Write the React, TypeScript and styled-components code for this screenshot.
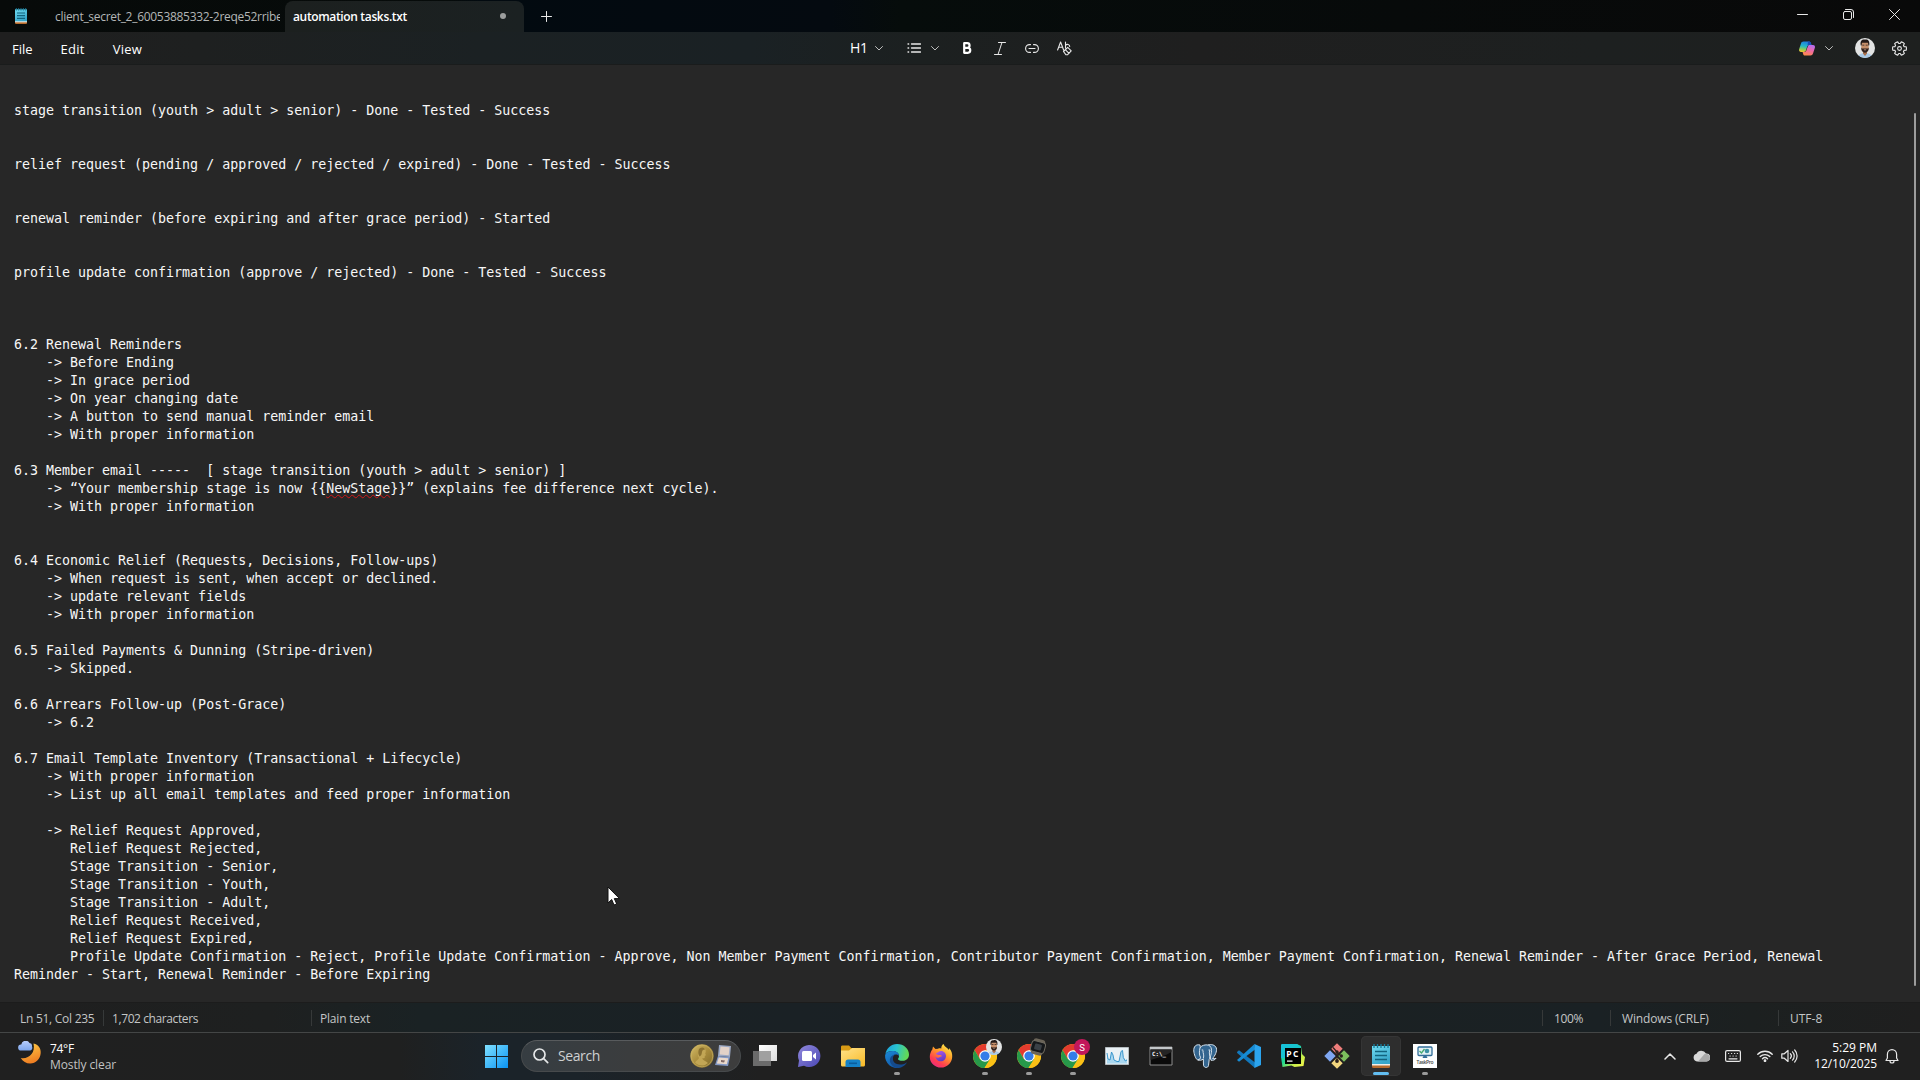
import React from "react";
import styled, { createGlobalStyle, css } from "styled-components";

const Global = createGlobalStyle`
  * { box-sizing: border-box; }
  html, body { margin: 0; padding: 0; background: #272727; overflow: hidden; }
`;

const Screen = styled.div`
  width: 1920px;
  height: 1080px;
  display: flex;
  flex-direction: column;
  overflow: hidden;
  color: #fff;
  font-family: "Open Sans", "Noto Sans", sans-serif;
  font-size: 12px;
`;

const Text = styled.span<{ $size?: number; $track?: number; $color?: string; $weight?: number; $line?: number }>`
  font-size: ${(p) => p.$size ?? 12}px;
  letter-spacing: ${(p) => p.$track ?? 0}px;
  color: ${(p) => p.$color ?? "#fff"};
  font-weight: ${(p) => p.$weight ?? 400};
  line-height: ${(p) => p.$line ?? 16}px;
  white-space: pre;
`;

/* title bar */
const TitleBar = styled.div`
  height: 32px;
  flex: none;
  display: flex;
  align-items: flex-start;
  background: linear-gradient(90deg, #070a09 0, #060b0a 450px, #020a10 480px, #040a10 830px, #060c0b 900px, #070a0a 1400px, #090909 100%);
`;
const AppIcon = styled.div`
  width: 55px;
  padding: 8px 0 0 13px;
`;
const IdleTab = styled.div`
  width: 230px;
  height: 32px;
  padding-top: 9px;
  overflow: hidden;
`;
const IdleLabel = styled.div`
  width: 225px;
  overflow: hidden;
  line-height: 16px;
`;
const ActiveTab = styled.div`
  width: 239px;
  height: 31px;
  margin-top: 1px;
  padding: 8px 18px 0 8px;
  display: flex;
  justify-content: space-between;
  border-radius: 8px 8px 0 0;
  background: linear-gradient(90deg, #1c201f, #1b2122);
`;
const Dot = styled.i`
  width: 6px;
  height: 6px;
  margin-top: 4px;
  border-radius: 50%;
  background: #9b9d9d;
`;
const NewTab = styled.div`
  padding: 11px 0 0 17px;
  flex: 1;
  svg { display: block; }
`;
const WindowButtons = styled.div`
  display: flex;
  align-items: center;
  height: 29px;
  padding-right: 3px;
`;
const WindowButton = styled.div`
  width: 46px;
  display: flex;
  justify-content: center;
`;

/* menu row */
const MenuBar = styled.div`
  height: 33px;
  flex: none;
  display: grid;
  grid-template-columns: 850px 1fr auto;
  align-items: center;
  border-bottom: 1px solid #1a1c1c;
  background: linear-gradient(90deg, #1f1f1f 0, #1e2020 200px, #1b2123 480px, #1a2124 750px, #1c2020 920px, #1f1f1f 1200px, #1d2020 1600px, #1e201f 100%);
`;
const Menus = styled.div`
  display: flex;
  gap: 28px;
  padding: 1px 0 0 12px;
`;
const FormatTools = styled.div`
  display: flex;
  align-items: center;
`;
const Slot = styled.div<{ $w: number; $end?: boolean }>`
  width: ${(p) => p.$w}px;
  height: 32px;
  flex: none;
  display: flex;
  align-items: center;
  justify-content: ${(p) => (p.$end ? "flex-end" : "flex-start")};
`;
const AccountTools = styled.div`
  display: flex;
  align-items: center;
  padding-right: 13px;
`;

/* document */
const Editor = styled.div`
  flex: 1;
  min-height: 0;
  display: flex;
  justify-content: space-between;
  background: #272727;
`;
const Document = styled.div`
  padding: 37px 0 0 14px;
  font-family: "DejaVu Sans Mono", monospace;
  font-size: 13.31px;
  color: #f7f7f7;
`;
const DocLine = styled.div`
  display: flex;
  height: 18px;
  line-height: 18px;
  white-space: pre;
`;
const Misspelt = styled.span`
  text-decoration: underline wavy #d01818 1px;
  text-underline-offset: 1px;
  text-decoration-skip-ink: none;
`;
const ScrollThumb = styled.div`
  width: 2px;
  height: 873px;
  margin: 48px 4px 0 0;
  border-radius: 1px;
  background: #9c9c9c;
`;

/* status bar */
const StatusBar = styled.div`
  height: 30px;
  flex: none;
  display: flex;
  align-items: center;
  border-top: 1px solid #1c1c1c;
  background: linear-gradient(90deg, #1f1f1f 0, #1e2020 270px, #1a2224 420px, #1a2125 800px, #1b2122 1200px, #1a2124 1600px, #1c2020 1750px, #1f1f1f 100%);
`;
const StatusCell = styled.div<{ $w?: number; $pad: number; $line?: boolean }>`
  ${(p) => (p.$w ? css`width: ${p.$w}px;` : css`flex: 1;`)}
  height: 16px;
  padding: 2px 0 0 ${(p) => p.$pad}px;
  display: flex;
  align-items: center;
  border-left: ${(p) => (p.$line ? "1px solid #363939" : "0")};
`;

/* taskbar */
const Taskbar = styled.div`
  height: 48px;
  flex: none;
  display: grid;
  grid-template-columns: 474px 1fr auto;
  align-items: start;
  padding-top: 3px;
  border-top: 1px solid #444646;
  background: linear-gradient(90deg, #202020 0, #1f2020 400px, #1b2329 480px, #1b2329 580px, #202020 760px, #202020 100%);
`;
const Weather = styled.div`
  display: flex;
  padding: 5px 0 0 18px;
  gap: 8px;
`;
const Stack = styled.div<{ $right?: boolean }>`
  display: flex;
  flex-direction: column;
  align-items: ${(p) => (p.$right ? "flex-end" : "flex-start")};
`;
const Launchers = styled.div`
  display: flex;
  align-items: center;
  height: 40px;
`;
const StartButton = styled.div`
  width: 47px;
  display: flex;
  padding-left: 11px;
`;
const SearchBox = styled.div`
  width: 220px;
  height: 32px;
  display: flex;
  align-items: center;
  margin-right: 2px;
  padding: 0 8px 0 11px;
  border-radius: 16px;
  border: 1px solid #474a4c;
  border-top-color: #585b5d;
  background: linear-gradient(90deg, #363d42, #3b3d3e 50%, #3d3d3d);
`;
const SearchText = styled.div`
  flex: 1;
  padding-left: 9px;
`;
const TaskButton = styled.div<{ $active?: boolean }>`
  width: 40px;
  height: 40px;
  margin: 0 2px;
  padding-top: 8px;
  display: flex;
  flex-direction: column;
  align-items: center;
  border-radius: 5px;
  background: ${(p) => (p.$active ? "#2e2e2e" : "transparent")};
  box-shadow: ${(p) => (p.$active ? "inset 0 0 0 1px #353535" : "none")};
  svg { overflow: visible; }
`;
const Running = styled.i<{ $active?: boolean }>`
  width: ${(p) => (p.$active ? 16 : 6)}px;
  height: 3px;
  margin-top: 4px;
  border-radius: 2px;
  background: ${(p) => (p.$active ? "#62bdf0" : "#9a9a9a")};
`;
const Tray = styled.div`
  display: flex;
  align-items: center;
  height: 40px;
  padding-right: 21px;
  svg { display: block; }
`;

const Cursor = styled.svg`
  position: absolute;
  left: 607px;
  top: 886px;
`;

type Glyph = { w?: number; h?: number; box?: string; sw?: number; color?: string; children: React.ReactNode };
const Line = ({ w = 16, h = 16, box, sw = 1, color = "#e8e8e8", children }: Glyph) => (
  <svg width={w} height={h} viewBox={box ?? `0 0 ${w} ${h}`} fill="none" stroke={color} strokeWidth={sw} strokeLinecap="round" strokeLinejoin="round">
    {children}
  </svg>
);
const Chevron = () => <Line w={8} h={5} color="#bdbdbd"><path d="M.5.5 4 4 7.5.5" /></Line>;

const NotepadIcon = ({ w, h }: { w: number; h: number }) => (
  <svg width={w} height={h} viewBox="0 0 20 24">
    <defs><linearGradient id="np" x2=".5" y2="1"><stop stopColor="#72dcf2" /><stop offset="1" stopColor="#36a6ca" /></linearGradient></defs>
    <path d="M1 20h18v2.500a1.500 1.500 0 0 1-1.500 1.500h-15A1.500 1.500 0 0 1 1 22.500z" fill="#b76b2c" />
    <path d="M1 19h18v2.500H1z" fill="#f0eee8" />
    <path d="M1 2h18v18H1z" fill="url(#np)" />
    <path d="M3 0v4M6.500 0v4M10 0v4M13.500 0v4M17 0v4" stroke="#167d9d" strokeWidth="1.300" />
    <path d="M4 7.500h12M4 11.500h12M4 15.500h12" stroke="#12647f" strokeWidth="1.700" />
  </svg>
);

const CopilotIcon = () => (
  <svg width="16" height="15" viewBox="0 0 16 15">
    <defs>
      <linearGradient id="cpa" x1=".5" x2=".3" y2="1"><stop stopColor="#1f7de0" /><stop offset=".45" stopColor="#25b6c8" /><stop offset=".75" stopColor="#8ccd55" /><stop offset="1" stopColor="#f1c62f" /></linearGradient>
      <linearGradient id="cpb" x1=".7" x2=".3" y2="1"><stop stopColor="#b56cf0" /><stop offset=".5" stopColor="#ef6aa0" /><stop offset="1" stopColor="#ff8a4a" /></linearGradient>
    </defs>
    <path d="M4.500.500H10c1.400 0 1.700 1 2 2.100l.5 1.700H10c-1.200 0-1.700.8-2 1.800L7 9.300C6.600 10.400 6 11 4.800 11H2C.2 11-.3 9.600.2 8L2 2.400C2.400 1.200 3.200.500 4.500.500z" fill="url(#cpa)" />
    <path d="M11.500 14.500H6c-1.400 0-1.700-1-2-2.100L3.600 11H5c1.500 0 2.200-.8 2.600-2L8.700 5.700C9 4.600 9.700 4 11 4h3c1.800 0 2.300 1.400 1.800 3L14 12.600c-.4 1.200-1.200 1.900-2.500 1.900z" fill="url(#cpb)" />
    <path d="M9 .500h1c1.400 0 1.700 1 2 2.100l.5 1.500H8.600z" fill="#174fb8" />
  </svg>
);

const Portrait = ({ x = 0, y = 0, size = 20 }: { x?: number; y?: number; size?: number }) => (
  <svg x={x} y={y} width={size} height={size} viewBox="0 0 20 20">
    <circle cx="10" cy="10" r="10" fill="#e2e3e3" />
    <path d="M3.500 17.500C5 15.500 8 15 10 15s5 .500 6.500 2.500A10 10 0 0 1 3.500 17.500z" fill="#a9c9e6" />
    <path d="M8 12h4v3.500l-2 2.500-2-2.500z" fill="#a86f4c" />
    <path d="M6.300 4h7.400v6.200c0 2.300-1.900 4.400-3.700 4.400s-3.700-2.100-3.700-4.400z" fill="#c68f6a" />
    <path d="M5.800 7.500C4.800 3 7 1.300 9.500 1.600c3-.9 5.600.900 4.700 5.900h-.8L13 4.800H7l-.4 2.700z" fill="#241a18" />
    <path d="M6.300 9.500c.5 1.300 1.500 1.200 3.700 1 2.200.2 3.200.300 3.700-1v1.200c0 2.300-1.900 4-3.700 4s-3.700-1.700-3.700-4zM7.300 6.700h2v.7h-2zM10.700 6.700h2v.7h-2z" fill="#30211d" />
    <path d="M8.700 11.500h2.600l-.5.7H9.200z" fill="#d9aa94" />
  </svg>
);

const ChromeIcon = ({ children }: { children?: React.ReactNode }) => (
  <svg width="24" height="24" viewBox="0 0 24 24">
    <circle cx="12" cy="12" r="12" fill="#fbc116" />
    <path d="M1.600 6A12 12 0 0 1 22.400 6H12l-5.200 9z" fill="#e33b2e" />
    <path d="M1.600 6 6.800 15 12 18 11.500 24A12 12 0 0 1 1.600 6z" fill="#27994a" />
    <path d="M6.800 15h10.400L11.500 24A12 12 0 0 1 3 20z" fill="#27994a" />
    <path d="M22.400 6A12 12 0 0 1 11.500 24l5.700-9L15 6z" fill="#fbc116" />
    <circle cx="12" cy="12" r="5.800" fill="#fff" />
    <circle cx="12" cy="12" r="4.600" fill="#347de8" />
    {children}
  </svg>
);

const StartIcon = () => (
  <svg width="23" height="23" viewBox="0 0 23 23">
    <defs><linearGradient id="win" x2="1" y2="1"><stop stopColor="#7fe0ff" /><stop offset="1" stopColor="#0a93f2" /></linearGradient></defs>
    <path d="M0 0h11v11H0zM12 0h11v11H12zM0 12h11v11H0zM12 12h11v11H12z" fill="url(#win)" />
  </svg>
);

const MedalIcon = () => (
  <svg width="42" height="26" viewBox="0 0 42 26">
    <defs><linearGradient id="gold" x2="1" y2="1"><stop stopColor="#d5bd69" /><stop offset=".5" stopColor="#a98c3c" /><stop offset="1" stopColor="#7e682a" /></linearGradient></defs>
    <circle cx="12" cy="13" r="11.700" fill="url(#gold)" />
    <circle cx="12" cy="13" r="10.800" fill="none" stroke="#cfb766" strokeWidth=".6" />
    <path d="M8.500 7.500C9 4 14.500 3.500 15.500 7c.5 1.500.2 2.500-.3 3.500l.8 1.700-1.200.5-.2 2.300-2.600.5c1 2 4 2.500 6 4.500-3.500 3.500-9.500 3.500-13-.5 1-2 3-2.500 4-4.500-1.500-2-1.500-5-.5-7.500z" fill="#c2a655" />
    <path d="M8.500 7.500C9 4 14 3.500 15 6.500c-2 0-3 1-3.200 3.500-.2 2-1 2.500-2 3.500-1.500-1.500-1.800-4-1.300-6z" fill="#8c7231" />
    <path d="m29 2 12 1-1 11-12-1z" fill="#9aa8c4" />
    <path d="m30.500 3.500 9 .8-.8 8-9-.7z" fill="#e2d2c8" />
    <path d="m28 13 12 1-2 9-13-1z" fill="#8298c4" />
    <path d="m28.800 14.500 9.500.8-1.500 6-10-.8z" fill="#ead9cb" />
    <path d="m31 17 4 .5-1 2-3-.5z" fill="#826a66" />
  </svg>
);

const TaskViewIcon = () => (
  <svg width="24" height="24" viewBox="0 0 24 24">
    <defs><linearGradient id="tv" x2="1" y2="1"><stop stopColor="#fff" /><stop offset="1" stopColor="#dcdcdc" /></linearGradient></defs>
    <path d="M6 1h18v16H6z" fill="url(#tv)" />
    <path d="M0 7h18v15H0z" fill="#6b6b6b" />
    <path d="M6 7h12v10H6z" fill="#a0a0a0" />
  </svg>
);

const ChatIcon = () => (
  <svg width="24" height="24" viewBox="0 0 24 24">
    <defs><linearGradient id="chat" x2="1" y2="1"><stop stopColor="#9189dc" /><stop offset="1" stopColor="#4b48b5" /></linearGradient></defs>
    <path d="M12 1a11.300 11 0 1 1-5 20.800L1 23l1-6.500A11.300 11 0 0 1 12 1z" fill="url(#chat)" />
    <rect x="5" y="7" width="10" height="10" rx="1.500" fill="#fff" />
    <path d="m16 11 3-2.500v7L16 13z" fill="#fff" />
  </svg>
);

const FolderIcon = () => (
  <svg width="24" height="24" viewBox="0 0 24 24">
    <defs><linearGradient id="fold" x2=".8" y2="1"><stop stopColor="#ffe28a" /><stop offset="1" stopColor="#f9bd2e" /></linearGradient></defs>
    <path d="M0 3c0-1 .5-1.500 1.500-1.500H8l2.500 2.700H22c1.500 0 2 .8 2 1.800V12H0z" fill="#d99b15" />
    <path d="M0 6.500h8L11 4h13v17c0 .800-.6 1.500-1.500 1.500h-21C.6 22.500 0 21.800 0 21z" fill="url(#fold)" />
    <path d="M4.500 23v-5c0-1.500 1-2.500 2.500-2.500h10c1.500 0 2.500 1 2.500 2.500v5z" fill="#1581c7" />
    <path d="M8 18.500h8v1.600H8z" fill="#0b5d9d" />
  </svg>
);

const EdgeIcon = () => (
  <svg width="24" height="24" viewBox="0 0 24 24">
    <defs>
      <linearGradient id="eda" x2="1" y2=".2"><stop stopColor="#1c9ede" /><stop offset=".5" stopColor="#29c3d0" /><stop offset="1" stopColor="#62d957" /></linearGradient>
      <linearGradient id="edb" x2=".6" y2="1"><stop stopColor="#1b8ad8" /><stop offset="1" stopColor="#1258a8" /></linearGradient>
    </defs>
    <path d="M.3 10.500C1.300 4.500 6 0 12 0c7 0 12 5 12 10.500 0 4-3 6.300-6.500 6.300-2.800 0-4.500-1-4.500-1.900 0-.7 1-1 1-3C14 9.500 11.500 7 8 7 4 7 1 8.500.3 10.500z" fill="url(#eda)" />
    <path d="M.1 11C1 8.500 4 7 8 7c3.500 0 6 2.300 6 4.700-1-.9-2-1.200-3.200-1.200-2 0-3.300 1.500-3.300 4.200 0 4 3 8 7.500 8.900A12 12 0 0 1 .1 11z" fill="url(#edb)" />
    <path d="M8 13.500c-.8 5 3.500 7.500 8.500 6.900 2.200-.2 4.200-1.200 5.600-2.200C20 22 16 24 12.500 24 8 23.500 4.500 19.500 4.900 15.500 5.300 12.500 8 10.500 10.800 10.500 8.900 11 8.200 12.200 8 13.500z" fill="#154a8c" />
  </svg>
);

const FirefoxIcon = () => (
  <svg width="24" height="24" viewBox="0 0 24 24">
    <defs>
      <linearGradient id="ffa" x1=".8" x2=".2" y2="1"><stop stopColor="#fff04e" /><stop offset=".4" stopColor="#ff9a28" /><stop offset=".75" stopColor="#ff3d50" /><stop offset="1" stopColor="#e82a88" /></linearGradient>
      <linearGradient id="ffb" x2=".4" y2="1"><stop stopColor="#b45ce8" /><stop offset="1" stopColor="#623bc8" /></linearGradient>
    </defs>
    <path d="M14.500 0c1 3 4 3.700 5.500 6 .2-1 .1-1.500 0-2 2.500 2.500 3.500 6 3.200 9C22.800 19 18 23.600 12 23.600S.8 19 .8 13c0-3 1-5.500 2.500-7.500L4 2.500 6.500 5l2.700-.300C10 4 11 4.500 12.300 4.500 12.200 2.500 13 1 14.500 0z" fill="url(#ffa)" />
    <path d="M7 9c2 0 2-1.500 4.500-2 3-.5 5.500 2 5.500 5s-2.200 5.300-5.200 5.300S6.500 15 6.500 12.500C7.500 14 9 14.200 10.500 13.200c1-.6 1.600-.9 2.500-1-.8-1.200-2-1.300-3.500-1.200C8 11 7.200 10.200 7 9z" fill="url(#ffb)" />
  </svg>
);

const MonitorGraphIcon = () => (
  <svg width="24" height="24" viewBox="0 0 24 24">
    <path d="M.5 3.500h23v17H.5z" fill="#e9f1f5" stroke="#b5bcc0" />
    <path d="M2 19.500V10l1 5 2 1 1.500-8 1.500 3 1 5 3 1 2 0 2-9 1.500-2 .8 7 2 3 1.700-1v4.500z" fill="#a9d7f0" />
    <path d="M2 9l1 6 2 1 1.500-8 1.500 3 1 5 3 1.500h2l2-10 1.500-1 .8 7 2 3.500 1.700-1" fill="none" stroke="#2d8fc8" strokeWidth=".9" />
  </svg>
);

const TerminalIcon = () => (
  <svg width="24" height="24" viewBox="0 0 24 24">
    <path d="M1 3h22v18H1z" fill="#0a0a0a" stroke="#8d8d8d" />
    <path d="M1 3h22v2.500H1z" fill="#c3c7ca" />
    <path d="M1.500 16C8 14 16 12 22.500 8V5.500h-21z" fill="#242424" />
    <text x="3" y="11.500" fontSize="5.800" fontFamily="DejaVu Sans Mono" fontWeight="700" fill="#fff">C:\_</text>
  </svg>
);

const PostgresIcon = () => (
  <svg width="24" height="24" viewBox="0 0 24 24" stroke="#d6e2ec" strokeWidth="1" strokeLinejoin="round">
    <path d="M7 1C3 0 .5 2.500.8 7c.2 3 2 8.500 4 9 1.500.3 2-1 3.500-3z" fill="#33658f" />
    <path d="M15 1c3-1 7-.3 8.300 3 1 3.500-1.500 8-3.800 10.500 1 .4 2.500.2 3.500-.2-1 1.700-3 2.200-5 2L16 8z" fill="#33658f" />
    <path d="M7 4c1-3 9-5 11-.5 1.500 4-.5 9-1.800 12l-.7 6c-.3 2.500-4.500 2.700-5-.3L10.300 15c-1.600 1.500-4 1.500-5.300.8 2-.6 2.500-1 2.500-2.500C6 11 6.200 7 7 4z" fill="#33658f" />
    <path d="M10 6.500c-.2 3 1.500 4 .3 8M17 6c-1.500 3 0 5 0 8.500" fill="none" />
    <path d="M8.700 6h1.500M15.500 6H17" />
  </svg>
);

const CodeIcon = () => (
  <svg width="24" height="24" viewBox="0 0 24 24">
    <path d="M0 8 2 6.300 18 18.500V24L.2 9z" fill="#1278bd" />
    <path d="M0 16 17.500 0 18 5.500 2 17.700z" fill="#168cd5" />
    <path d="M17.500 0 24 3v18l-6.500 3V0z" fill="#2ba4ee" />
  </svg>
);

const PyCharmIcon = () => (
  <svg width="24" height="24" viewBox="0 0 24 24">
    <defs><linearGradient id="pyc" x1="0" y1="0" x2="1" y2="1"><stop stopColor="#21c7d9" /><stop offset=".45" stopColor="#20d78f" /><stop offset=".7" stopColor="#c4ee4b" /><stop offset="1" stopColor="#fcf84a" /></linearGradient></defs>
    <path d="M0 1 1 0h15l4 2 1 8 3 3-1.500 9-9 1-3-1.500-9 1.500L0 13z" fill="url(#pyc)" />
    <path d="M0 1 1 0h15l4 3-5 11H0z" fill="#14bedd" opacity=".75" />
    <path d="M4 4h16v16H4z" fill="#000" />
    <text x="5.300" y="12.800" fontSize="8.500" fontFamily="Open Sans" fontWeight="700" fill="#fff" textLength="12">PC</text>
    <path d="M6 16.500h5.500v1.200H6z" fill="#fff" />
  </svg>
);

const GitIcon = () => (
  <svg width="24" height="24" viewBox="0 0 24 24">
    <rect x="8" y=".8" width="8" height="8" transform="rotate(45 12 4.800)" fill="#ef7d7b" />
    <rect x="1" y="8" width="8" height="8" transform="rotate(45 5 12)" fill="#7fa7f2" />
    <rect x="15" y="8" width="8" height="8" transform="rotate(45 19 12)" fill="#7cc05d" />
    <rect x="8" y="15.200" width="8" height="8" transform="rotate(45 12 19.200)" fill="#f3d77f" />
    <path d="M8 3.500 12 8v9M12 8l4 4" stroke="#2b211d" strokeWidth="1.200" fill="none" />
    <circle cx="12" cy="8" r="1.700" fill="#2b211d" /><circle cx="12" cy="17" r="1.900" fill="#2b211d" /><circle cx="16.300" cy="12" r="1.700" fill="#2b211d" />
  </svg>
);

const TaskProIcon = () => (
  <svg width="24" height="24" viewBox="0 0 24 24">
    <path d="M0 0h24v24H0z" fill="#fff" />
    <rect x="5" y="3" width="14" height="8.500" rx="1" fill="#e3f1f5" stroke="#326e99" strokeWidth="1.300" />
    <path d="m6.500 7 2 2 3-4" stroke="#43a870" strokeWidth="1.300" fill="none" />
    <circle cx="14" cy="7" r="2.300" fill="#3c91a5" />
    <path d="M10.500 12h3l1 2h-5z" fill="#326e99" />
    <text x="3.500" y="19.500" fontSize="5" fontFamily="Open Sans" fontWeight="600" fill="#444" textLength="17">TaskPro</text>
  </svg>
);

const WeatherIcon = () => (
  <svg width="24" height="24" viewBox="0 0 24 24">
    <defs>
      <linearGradient id="moon" x2=".3" y2="1"><stop stopColor="#ffcf48" /><stop offset="1" stopColor="#ef8023" /></linearGradient>
      <linearGradient id="cloud" x2="0" y2="1"><stop stopColor="#b7cdfb" /><stop offset="1" stopColor="#7da6ec" /></linearGradient>
    </defs>
    <path d="M15.500 2.500c5 1 7.500 5 7.200 9.500-.4 6-5 10.500-10.500 10.500-4 0-7.500-2-9.500-5.500 8 1.500 15-5 12.800-14.500z" fill="url(#moon)" />
    <path d="M3 9.500a3 3 0 0 1 .3-6A4.400 4.400 0 0 1 11.500 2 3 3 0 0 1 14 5.500c.6 1 .4 3.800-2 4z" fill="url(#cloud)" />
  </svg>
);

const FLAGGED = "NewStage";
const NOTE = `stage transition (youth > adult > senior) - Done - Tested - Success


relief request (pending / approved / rejected / expired) - Done - Tested - Success


renewal reminder (before expiring and after grace period) - Started


profile update confirmation (approve / rejected) - Done - Tested - Success



6.2 Renewal Reminders
    -> Before Ending
    -> In grace period
    -> On year changing date
    -> A button to send manual reminder email
    -> With proper information

6.3 Member email -----  [ stage transition (youth > adult > senior) ]
    -> “Your membership stage is now {{NewStage}}” (explains fee difference next cycle).
    -> With proper information


6.4 Economic Relief (Requests, Decisions, Follow-ups)
    -> When request is sent, when accept or declined.
    -> update relevant fields
    -> With proper information

6.5 Failed Payments & Dunning (Stripe-driven)
    -> Skipped.

6.6 Arrears Follow-up (Post-Grace)
    -> 6.2

6.7 Email Template Inventory (Transactional + Lifecycle)
    -> With proper information
    -> List up all email templates and feed proper information

    -> Relief Request Approved,
       Relief Request Rejected,
       Stage Transition - Senior,
       Stage Transition - Youth,
       Stage Transition - Adult,
       Relief Request Received,
       Relief Request Expired,
       Profile Update Confirmation - Reject, Profile Update Confirmation - Approve, Non Member Payment Confirmation, Contributor Payment Confirmation, Member Payment Confirmation, Renewal Reminder - After Grace Period, Renewal
Reminder - Start, Renewal Reminder - Before Expiring`;

const NoteLine = ({ text }: { text: string }) => {
  const [head, tail] = text.split(FLAGGED);
  if (tail === undefined) return <DocLine>{text}</DocLine>;
  return (
    <DocLine>
      <span>{head}</span>
      <Misspelt>{FLAGGED}</Misspelt>
      <span>{tail}</span>
    </DocLine>
  );
};

const at = (r: number, deg: number) => {
  const t = (deg * Math.PI) / 180;
  return `${(r * Math.cos(t)).toFixed(2)} ${(r * Math.sin(t)).toFixed(2)}`;
};
const gearPath =
  [0, 60, 120, 180, 240, 300]
    .map((a, i) => `${i ? "L" : "M"}${at(5, a - 22)}L${at(6.9, a - 15)}Q${at(7.2, a)} ${at(6.9, a + 15)}L${at(5, a + 22)}`)
    .join("") + "Z";

export default function App() {
  return (
    <Screen>
      <Global />
      <TitleBar>
        <AppIcon><NotepadIcon w={16} h={16} /></AppIcon>
        <IdleTab>
          <IdleLabel><Text $color="#b4b6b6" $track={-0.3}>client_secret_2_60053885332-2reqe52rribe</Text></IdleLabel>
        </IdleTab>
        <ActiveTab>
          <Text $weight={600} $track={-0.35}>automation tasks.txt</Text>
          <Dot />
        </ActiveTab>
        <NewTab><Line w={11} h={11}><path d="M5.500.500v10M.500 5.500h10" /></Line></NewTab>
        <WindowButtons>
          <WindowButton><Line w={11} h={11}><path d="M.500 5.500h10" /></Line></WindowButton>
          <WindowButton><Line w={11} h={11}><rect x=".5" y="2.500" width="8" height="8" rx="1.500" /><path d="M2.500.500H8a2.500 2.500 0 0 1 2.500 2.500v5.500" /></Line></WindowButton>
          <WindowButton><Line w={11} h={11}><path d="m.5.500 10 10m0-10-10 10" /></Line></WindowButton>
        </WindowButtons>
      </TitleBar>
      <MenuBar>
        <Menus>
          <Text $size={13}>File</Text>
          <Text $size={13} $track={0.25}>Edit</Text>
          <Text $size={13} $track={0.25}>View</Text>
        </Menus>
        <FormatTools>
          <Slot $w={25}><Text $size={14} $track={-0.4}>H1</Text></Slot>
          <Slot $w={32}><Chevron /></Slot>
          <Slot $w={24}>
            <Line w={14} h={10} sw={1.3}><path d="M4.500 1h9M4.500 5h9M4.500 9h9M1 1h.7M1 5h.7M1 9h.7" /></Line>
          </Slot>
          <Slot $w={32}><Chevron /></Slot>
          <Slot $w={31}>
            <Line w={9} h={12} sw={2.2} color="#fff"><path d="M1.200 1.200h3a2.300 2.300 0 0 1 0 4.700h-3zM1.200 5.900h3.600a2.450 2.450 0 0 1 0 4.900H1.200z" /></Line>
          </Slot>
          <Slot $w={31}>
            <Line w={12} h={13}><path d="M4.500.500h7M.500 12.500h7M8 .500l-4 12" /></Line>
          </Slot>
          <Slot $w={32}>
            <Line w={14} h={9} sw={1.1}><path d="M5.500.600h-1a3.900 3.900 0 0 0 0 7.800h1M8.500.600h1a3.900 3.900 0 0 1 0 7.800h-1M4 4.500h6" /></Line>
          </Slot>
          <Slot $w={20}>
            <Line w={15} h={15} sw={1.1}><path d="m.6 9 3-8 3 8M1.600 6.200h4M8.500 1v6M8.500 4.500c1.500-2 4.200-1 4.200 1M6.500 10.500l4.200-4.200 3.500 3.500-3.800 4H9zM8.300 8.700l3.700 3.700" /></Line>
          </Slot>
        </FormatTools>
        <AccountTools>
          <Slot $w={26}><CopilotIcon /></Slot>
          <Slot $w={30}><Chevron /></Slot>
          <Slot $w={37}><Portrait /></Slot>
          <Slot $w={15}>
            <Line w={15} h={15} box="-7.500 -7.500 15 15" sw={1.1}>
              <path d={gearPath} />
              <circle r="1.900" />
            </Line>
          </Slot>
        </AccountTools>
      </MenuBar>

      <Editor>
        <Document>
          {NOTE.split("\n").map((line, i) => <NoteLine key={i} text={line} />)}
        </Document>
        <ScrollThumb />
      </Editor>

      <StatusBar>
        <StatusCell $w={103} $pad={20}><Text $color="#c4c6c6" $track={-0.27}>Ln 51, Col 235</Text></StatusCell>
        <StatusCell $w={208} $pad={8} $line><Text $color="#c4c6c6" $track={-0.4}>1,702 characters</Text></StatusCell>
        <StatusCell $pad={8} $line><Text $color="#c4c6c6" $track={-0.2}>Plain text</Text></StatusCell>
        <StatusCell $w={68} $pad={11} $line><Text $color="#c4c6c6" $track={-0.4}>100%</Text></StatusCell>
        <StatusCell $w={168} $pad={11} $line><Text $color="#c4c6c6" $track={-0.15}>Windows (CRLF)</Text></StatusCell>
        <StatusCell $w={142} $pad={11} $line><Text $color="#c4c6c6">UTF-8</Text></StatusCell>
      </StatusBar>

      <Taskbar>
        <Weather>
          <WeatherIcon />
          <Stack>
            <Text $track={-0.3}>74°F</Text>
            <Text $color="#c2c2c2" $track={-0.1}>Mostly clear</Text>
          </Stack>
        </Weather>
        <Launchers>
          <StartButton><StartIcon /></StartButton>
          <SearchBox>
            <Line w={16} h={16} sw={1.7} color="#e4e6e7"><circle cx="6.500" cy="6.500" r="5.500" /><path d="m10.700 10.700 4 4" /></Line>
            <SearchText><Text $size={14} $track={-0.4} $line={20} $color="#cfd0d1">Search</Text></SearchText>
            <MedalIcon />
          </SearchBox>
          <TaskButton><TaskViewIcon /></TaskButton>
          <TaskButton><ChatIcon /></TaskButton>
          <TaskButton><FolderIcon /></TaskButton>
          <TaskButton><EdgeIcon /><Running /></TaskButton>
          <TaskButton><FirefoxIcon /></TaskButton>
          <TaskButton><ChromeIcon><Portrait x={13} y={-5} size={16} /></ChromeIcon><Running /></TaskButton>
          <TaskButton>
            <ChromeIcon>
              <g transform="rotate(15 21 3)"><rect x="15" y="-5" width="12" height="16" rx="3" fill="#6a6458" /><rect x="14" y="-2.500" width="14" height="11" rx="3" fill="#15181b" stroke="#6f6a60" /><rect x="17.500" y="0" width="7" height="6" rx="1" fill="#3a4046" /></g>
            </ChromeIcon>
            <Running />
          </TaskButton>
          <TaskButton>
            <ChromeIcon>
              <circle cx="21" cy="3" r="8" fill="#c2185b" />
              <text x="21" y="6.500" textAnchor="middle" fontSize="9.500" fontFamily="Roboto" fill="#fff">S</text>
            </ChromeIcon>
            <Running />
          </TaskButton>
          <TaskButton><MonitorGraphIcon /></TaskButton>
          <TaskButton><TerminalIcon /></TaskButton>
          <TaskButton><PostgresIcon /></TaskButton>
          <TaskButton><CodeIcon /></TaskButton>
          <TaskButton><PyCharmIcon /></TaskButton>
          <TaskButton><GitIcon /></TaskButton>
          <TaskButton $active><NotepadIcon w={20} h={24} /><Running $active /></TaskButton>
          <TaskButton><TaskProIcon /><Running /></TaskButton>
        </Launchers>
        <Tray>
          <Slot $w={29}><Line w={12} h={7} sw={1.5}><path d="m1 6 5-5 5 5" /></Line></Slot>
          <Slot $w={32}>
            <svg width="17" height="12" viewBox="0 0 17 12">
              <path d="M4 11.500a4 4 0 0 1-.5-7.800A5.300 5.300 0 0 1 13 3.500a4 4 0 0 1 .5 8z" fill="#d8d8d8" />
              <path d="M5 11.500 11.500 4c2.500-.8 5.500 1 5.500 4 0 2-1.500 3.500-3.500 3.500z" fill="#a9a9a9" />
            </svg>
          </Slot>
          <Slot $w={32}>
            <Line w={16} h={12} sw={1.2}><rect x=".6" y=".6" width="14.800" height="10.800" rx="1.500" /><path d="M3.500 3.500h.2M6.500 3.500h.2M9.500 3.500h.2M12.300 3.500h.2M5 6h.2M8 6h.2M11 6h.2M4 8.800h8" /></Line>
          </Slot>
          <Slot $w={24}>
            <Line w={16} h={12} sw={1.4}><path d="M.8 4.200a10.200 10.200 0 0 1 14.400 0M3.200 6.600a6.800 6.800 0 0 1 9.600 0M5.500 8.800a3.600 3.600 0 0 1 5 0" /><circle cx="8" cy="10.700" r=".7" fill="#fff" /></Line>
          </Slot>
          <Slot $w={33}>
            <Line w={17} h={14} sw={1.2}><path d="M.8 4.800h2.500L7 1.500v11L3.300 9.200H.8zM9.300 4.700a3.300 3.300 0 0 1 0 4.600M11.500 2.800a6 6 0 0 1 0 8.400M13.700 1a8.700 8.700 0 0 1 0 12" /></Line>
          </Slot>
          <Slot $w={63} $end>
            <Stack $right>
              <Text>5:29 PM</Text>
              <Text $track={-0.1}>12/10/2025</Text>
            </Stack>
          </Slot>
          <Slot $w={22} $end>
            <Line w={14} h={15} sw={1.2}><path d="M1 11.500 2.400 9V5.300a4.600 4.600 0 0 1 9.200 0V9L13 11.500zM5 12a2 2 0 0 0 4 0" /></Line>
          </Slot>
        </Tray>
      </Taskbar>
      <Cursor width="14" height="21" viewBox="0 0 14 21">
        <path d="M1 1v16l3.700-3.500L7 19l2.700-1.100-2.400-5.300H12.500z" fill="#fff" stroke="#111" />
      </Cursor>
    </Screen>
  );
}
